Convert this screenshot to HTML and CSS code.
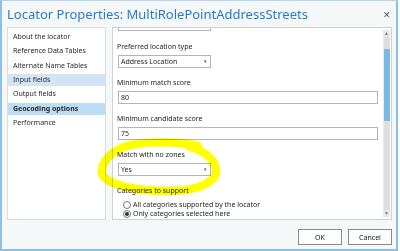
FILE: index.html
```html
<!DOCTYPE html>
<html lang="en">
<head>
    <meta charset="UTF-8">
    <title>Locator Properties</title>
    <link rel="stylesheet" href="styles.css">
</head>
<body>
    <div class="window">
        <div class="titlebar">
            <span class="title">Locator Properties: MultiRolePointAddressStreets</span>
            <span class="close">&#x2715;</span>
        </div>
        <div class="main">
            <ul class="nav">
                <li>About the locator</li>
                <li>Reference Data Tables</li>
                <li>Alternate Name Tables</li>
                <li class="hover">Input fields</li>
                <li>Output fields</li>
                <li class="active">Geocoding options</li>
                <li>Performance</li>
            </ul>
            <div class="panel">
                <div class="content">
                    <div class="select cut"></div>
                    <label class="lbl first">Preferred location type</label>
                    <div class="select">Address Location<span class="caret">&#x25BE;</span></div>
                    <label class="lbl">Minimum match score</label>
                    <div class="input">80</div>
                    <label class="lbl">Minimum candidate score</label>
                    <div class="input">75</div>
                    <label class="lbl">Match with no zones</label>
                    <div class="select">Yes<span class="caret">&#x25BE;</span></div>
                    <label class="lbl">Categories to support</label>
                    <div class="radio top"><span class="dot"></span>All categories supported by the locator</div>
                    <div class="radio"><span class="dot on"></span>Only categories selected here</div>
                </div>
                <div class="scrollbar">
                    <span class="arrow">&#x25B2;</span>
                    <div class="track"><div class="thumb"></div></div>
                    <span class="arrow">&#x25BC;</span>
                </div>
                <!-- highlighter scribble around the "Match with no zones" field -->
                <svg class="marker" width="140" height="70" viewBox="0 0 140 70">
                    <path d="M108 11 C85 6 50 6 34 12 C19 18 11 28 12 38 C14 50 50 57 85 56 C108 55 126 47 126 36 C126 25 115 16 100 12"
                          fill="none" stroke="#ffff00" stroke-width="8.5" stroke-linecap="round"/>
                </svg>
            </div>
        </div>
        <div class="buttons">
            <button class="btn">OK</button>
            <button class="btn">Cancel</button>
        </div>
    </div>
</body>
</html>
```

FILE: styles.css
```css
html, body {
    margin: 0;
    padding: 0;
}
body {
    width: 400px;
    height: 251px;
    overflow: hidden;
    background: #fff;
    font-family: "Noto Sans", "Open Sans", sans-serif;
    font-size: 7px;
    color: #1e1e1e;
}
.window {
    box-sizing: border-box;
    width: 398px;
    height: 251px;
    background: #f5f8f9;
    border: 2px solid #8fc0e3;
    border-top: 1px solid #b3d3ec;
    display: flex;
    flex-direction: column;
    padding: 0 4px 0 5px;
}
.titlebar {
    height: 26px;
    display: flex;
    align-items: center;
    justify-content: space-between;
}
.title {
    color: #2b7ac9;
    font-size: 13px;
    margin-top: -1px;
}
.close {
    color: #555;
    font-size: 9px;
    margin-right: 1px;
}
.main {
    display: flex;
    gap: 6px;
    height: 193px;
}
.nav {
    list-style: none;
    margin: 0;
    padding: 3px 0 0 0;
    width: 99px;
    background: #fff;
    border: 1px solid #dcdcdc;
    box-sizing: border-box;
}
.nav li {
    height: 12px;
    line-height: 12px;
    margin-bottom: 2.33px;
    padding-left: 5px;
    color: #2a2a2a;
}
.nav .hover {
    background: #d3e5f5;
}
.nav .active {
    background: #bcdcf4;
    font-weight: bold;
}
.panel {
    position: relative;
    flex: 1;
    display: flex;
    background: #fff;
    border: 1px solid #d0d0d0;
}
.content {
    flex: 1;
    padding: 0 5px 0 4px;
    display: flex;
    flex-direction: column;
    align-items: flex-start;
}
.lbl {
    margin: 9px 0 3px 0;
    line-height: 11px;
}
.lbl.first {
    margin-top: 10px;
}
.select, .input {
    box-sizing: border-box;
    height: 13px;
    line-height: 11px;
    border: 1px solid #b4b4b4;
    padding-left: 2px;
    margin-left: 1px;
    background: #fff;
}
.select {
    width: 93px;
    position: relative;
}
.select.cut {
    height: 3px;
    border-top: none;
}
.caret {
    position: absolute;
    right: 3px;
    top: 0;
    font-size: 5px;
    color: #555;
}
.input {
    align-self: stretch;
}
.radio {
    display: flex;
    align-items: center;
    gap: 2px;
    height: 9px;
    line-height: 9px;
    margin-left: 6px;
    position: relative;
    z-index: 2;
}
.radio.top {
    margin-top: 1px;
}
.dot {
    box-sizing: border-box;
    width: 8px;
    height: 8px;
    border-radius: 50%;
    border: 1px solid #777;
    background: #fff;
    display: flex;
    align-items: center;
    justify-content: center;
}
.dot.on::after {
    content: "";
    width: 4px;
    height: 4px;
    border-radius: 50%;
    background: #333;
}
.scrollbar {
    width: 7px;
    margin: 2px 1px 2px 0;
    display: flex;
    flex-direction: column;
    align-items: center;
    background: #e9e9e9;
}
.arrow {
    font-size: 5px;
    color: #777;
    line-height: 7px;
}
.track {
    flex: 1;
    width: 6px;
    background: #dedede;
}
.thumb {
    margin-top: 12px;
    height: 72px;
    background: #79b9e7;
}
.marker {
    position: absolute;
    left: -23px;
    top: 107px;
    mix-blend-mode: multiply;
}
.buttons {
    display: flex;
    justify-content: flex-end;
    gap: 6px;
    padding: 9px 0 0 0;
}
.btn {
    width: 44px;
    height: 16px;
    font-family: inherit;
    font-size: 7px;
    color: #222;
    background: #fdfdfd;
    border: 1px solid #8a8a8a;
    padding: 0;
}
```
